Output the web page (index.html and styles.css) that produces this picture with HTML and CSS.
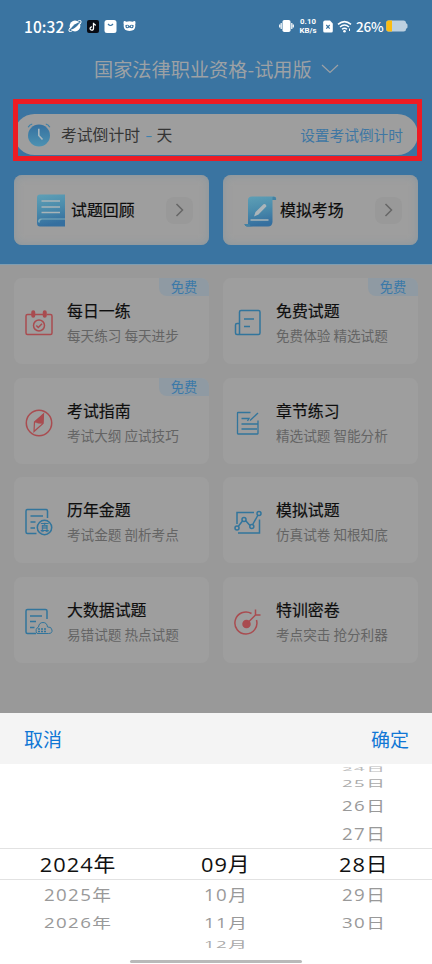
FILE: index.html
```html
<!DOCTYPE html>
<html lang="zh-CN">
<head>
<meta charset="utf-8">
<title>国家法律职业资格</title>
<link rel="stylesheet" href="styles.css">
</head>
<body>
<div class="phone">
  <header class="top">
    <div class="status">
      <span class="clock">10:32</span>
      <svg class="s-planet" width="14" height="14" viewBox="0 0 14 14"><circle cx="7" cy="7" r="5.400" fill="#fff"/><path d="M2.600 10.600C3.300 8.600 4.800 6.800 7 5.300S10.700 3.500 11.400 3.500C10.700 5.400 9.200 7.200 7 8.700S3.200 10.600 2.600 10.600Z" fill="#3a74a1"/><path d="M1.800 8.800Q.3 11.500 1.200 12.300T4.500 11.600M12.200 5.200Q13.700 2.500 12.800 1.700T9.500 2.400" fill="none" stroke="#fff" stroke-width="1"/></svg>
      <svg class="s-note" width="12" height="13" viewBox="0 0 12 13"><rect width="12" height="13" rx="2" fill="#080b14"/><path d="M6.500 2.800V8.500A1.700 1.700 0 1 1 5 6.800M6.500 3C6.800 4.500 7.800 5.200 9 5.200" fill="none" stroke="#fff" stroke-width="1.300"/></svg>
      <svg class="s-bag" width="13" height="13" viewBox="0 0 13 13"><rect x=".5" width="12" height="13" rx="2.500" fill="#fff"/><path d="M4 4Q6.500 7 9 4" fill="none" stroke="#3a74a1" stroke-width="1.200"/></svg>
      <svg class="s-cat" width="13" height="12" viewBox="0 0 13 12"><path d="M.8 1.200Q2 .8 3.300 1.700 6.500.7 9.700 1.700 11 .8 12.200 1.200 12.800 3 12.200 4.500 13.200 11 6.500 11T.8 4.500Q.2 3 .8 1.200Z" fill="#fff"/><path d="M2.200 5.500Q4.500 4 6.500 6 8.500 4 10.800 5.500 10.500 8.500 8.500 8.300L6.500 7.400 4.500 8.300Q2.500 8.500 2.200 5.500Z" fill="#3a74a1"/><circle cx="4.400" cy="6.400" r=".8" fill="#fff"/><circle cx="8.600" cy="6.400" r=".8" fill="#fff"/></svg>
      <svg class="s-vib" width="15" height="14" viewBox="0 0 15 14"><rect x="3.500" y="1" width="8" height="12" rx="1.800" fill="#fff"/><path d="M2.200 4V10M.7 5.500V8.500M12.800 4V10M14.300 5.500V8.500" stroke="#fff" stroke-width="1.200"/></svg>
      <span class="speed"><span>0.10</span><span>KB/s</span></span>
      <svg class="s-sim" width="10" height="13" viewBox="0 0 10 13"><path d="M2 .5H7L9.800 3.500V11Q9.800 12.500 8.300 12.500H1.700Q.2 12.500.2 11V2.300Q.2.500 2 .5Z" fill="#fff"/><path d="M3.300 5 6.700 8.700M6.700 5 3.300 8.700" stroke="#3a74a1" stroke-width="1.200"/></svg>
      <svg class="s-wifi" width="15" height="13" viewBox="0 0 15 13"><path d="M1 4.400Q7.500-1.200 14 4.400M3 7Q7.500 3 12 7M5 9.300Q7.500 7.200 10 9.300" fill="none" stroke="#fff" stroke-width="1.500"/><circle cx="7.500" cy="11.200" r="1.300" fill="#fff"/><path d="M12.500 8.500V11" stroke="#fff"/></svg>
      <span class="percent">26%</span>
      <svg class="s-bat" width="22" height="12" viewBox="0 0 22 12"><path d="M2.500.5H17.500Q20 .5 20 3L21.500 4.500V7.500L20 9Q20 11.500 17.500 11.500H2.500Q.3 11.500.3 9.500V2.500Q.3.500 2.500.5Z" fill="#bdd0e0"/><path d="M6 .5V11.500H2.500Q.3 11.500.3 9.500V2.500Q.3.500 2.500.5Z" fill="#fbbc12"/></svg>
    </div>
    <h1 class="exam">国家法律职业资格-试用版<svg width="18" height="10" viewBox="0 0 18 10"><path d="M1 1 9 8.500 17 1" fill="none" stroke="#9da1a5" stroke-width="1.200"/></svg></h1>
    <div class="countdown">
      <svg width="24" height="24" viewBox="0 0 24 24"><circle cx="12" cy="12.500" r="11" fill="url(#g2)"/><path d="M1.200 4.200Q2.500 1.500 5.200 1M18.800 1Q21.500 1.500 22.800 4.200" fill="none" stroke="#3b7fa8" stroke-width="1.200"/><path d="M11.800 5.800V12.500L15.500 16.500" fill="none" stroke="#a8b6be" stroke-width="1.600"/></svg>
      <span class="label">考试倒计时 <i>-</i> 天</span>
      <a class="set">设置考试倒计时</a>
      <div class="frame"></div>
    </div>
    <div class="quick">
      <div class="qcard">
        <svg width="28" height="33" viewBox="0 0 28 33"><path d="M3 .5H28V32.500H3Q0 32.500 0 29V3.500Q0 .5 3 .5Z" fill="url(#g1)"/><path d="M1 28Q1 24.500 4 24.500H28V25.500H5Q2.500 26 2.500 29Z" fill="#7fabba"/><path d="M4.500 7H23M4.500 13H23M4.500 18.500H23" stroke="#a8b4b8" stroke-width="1.500"/></svg>
        <span>试题回顾</span><b><svg width="9" height="14" viewBox="0 0 9 14"><path d="M1.500 1 7.500 7 1.500 13" fill="none" stroke="#666" stroke-width="1.500"/></svg></b>
      </div>
      <div class="qcard second">
        <svg width="33" height="33" viewBox="0 0 33 33"><path d="M8 2.500H30Q33 3 32 6H28.500V28Q28 32.500 24 32.500H3Q.5 32 .5 30H4V6Q4 2.500 8 2.500Z" fill="url(#g1)"/><path d="M28.500 6V3Q32.500 2 32 6ZM.5 30H5.500Q6 32.500 9 32.500H3Q.5 32 .5 30Z" fill="#4481a2"/><path d="M10 22.500 11.500 18 19.500 10.300Q21 9.500 22 11T21.800 13L14.500 20.500Z" fill="#abb5ba"/><path d="M6.500 26H24.500" stroke="#a8b4b8" stroke-width="1.500"/></svg>
        <span>模拟考场</span><b><svg width="9" height="14" viewBox="0 0 9 14"><path d="M1.500 1 7.500 7 1.500 13" fill="none" stroke="#666" stroke-width="1.500"/></svg></b>
      </div>
    </div>
  </header>
  <svg class="defs" width="0" height="0"><defs><linearGradient id="g1" x1="0" y1="0" x2=".2" y2="1"><stop offset="0" stop-color="#5fa0b6"/><stop offset=".5" stop-color="#4b8cac"/><stop offset="1" stop-color="#356f9f"/></linearGradient><linearGradient id="g2" x1="0" y1="0" x2="0" y2="1"><stop offset="0" stop-color="#36719f"/><stop offset="1" stop-color="#4c91b2"/></linearGradient></defs></svg>

  <main class="grid">
    <section class="card"><svg class="ic red" viewBox="0 0 28 28"><path d="M7 5.500H2.500Q1 5.500 1 7V24Q1 25.500 2.500 25.500H25.500Q27 25.500 27 24V7Q27 5.500 25.500 5.500H21.500M10 5.500H18.500"/><rect class="fill" x="7" y="2" width="2.500" height="6" rx="1.200"/><rect class="fill" x="18.500" y="2" width="2.500" height="6" rx="1.200"/><circle cx="14" cy="16.500" r="5.500"/><path d="M11.300 16.500 13.300 18.500 17 14.700"/></svg><div><h2>每日一练</h2><p>每天练习 每天进步</p></div><em>免费</em></section>
    <section class="card"><svg class="ic blue" viewBox="0 0 28 28"><path d="M5.500 25.500V3Q5.500 1.500 7 1.500H24.500Q26 1.500 26 3V24Q26 25.500 24.500 25.500H3Q1.500 25.500 1.500 24V16Q1.500 14.500 3 14.500H5.500M10 10H20M10 17.500H16"/></svg><div><h2>免费试题</h2><p>免费体验 精选试题</p></div><em>免费</em></section>
    <section class="card"><svg class="ic red" viewBox="0 0 28 28"><circle cx="14" cy="14" r="12.700"/><path d="M18.500 5 9.500 13 9 22.500 18 14.500Z" stroke-width="1.200"/><path class="fill" stroke-width=".5" d="M18.500 5 9.500 13 13.500 14.200 18 14.500Z"/></svg><div><h2>考试指南</h2><p>考试大纲 应试技巧</p></div><em>免费</em></section>
    <section class="card"><svg class="ic blue thin" viewBox="0 0 28 28"><path d="M16.500 3.500H4Q3.500 3.500 3.500 4V24.500Q3.500 25 4 25H23.500Q24 25 24 24.500V11.500M24 4 16 11.500M7.500 9.500H15L13.500 12M7.500 15H24M7.500 20H23"/></svg><div><h2>章节练习</h2><p>精选试题 智能分析</p></div></section>
    <section class="card"><svg class="ic blue" viewBox="0 0 28 28"><path d="M11.500 25.500H2.500Q1 25.500 1 24V3Q1 1.500 2.500 1.500H21Q22.500 1.500 22.500 3V10M5.500 8H18M5.500 14H10.500M5.500 20H10"/><circle cx="19.500" cy="19.500" r="7.200"/><text x="19.500" y="23" text-anchor="middle">真</text></svg><div><h2>历年金题</h2><p>考试金题 剖析考点</p></div></section>
    <section class="card"><svg class="ic blue" viewBox="0 0 28 28"><path d="M3 16V4.500H20M4 25H25.500V11.500M4.500 18 8.500 13M11.500 12.500 16 17.500M18.700 16.500 24 7"/><circle cx="3" cy="20" r="2"/><circle cx="10" cy="11.500" r="2"/><circle cx="17.800" cy="18.500" r="2"/><circle cx="25" cy="5.500" r="2"/></svg><div><h2>模拟试题</h2><p>仿真试卷 知根知底</p></div></section>
    <section class="card"><svg class="ic blue" viewBox="0 0 28 28"><path d="M11 25.500H2.500Q1 25.500 1 24V3Q1 1.500 2.500 1.500H20.500Q22 1.500 22 3V11M5 8H17M5 13.500H11M5 19.500H9.500"/><path d="M12 25.500Q9.500 21 13.500 19 14 14.500 18 14.500T22.500 19Q26.500 18.500 27 22T23.500 25.500Z" stroke-width="1"/><path d="M13 21H21M13 23.500H21" stroke-dasharray="2 1"/></svg><div><h2>大数据试题</h2><p>易错试题 热点试题</p></div></section>
    <section class="card"><svg class="ic red" viewBox="0 0 28 28"><path d="M17.500 5.500A11 11 0 1 0 22.500 12"/><circle class="fill" cx="12.500" cy="16" r="3.500"/><path d="M13 15.500 22 6.500M21.500 1.500V7H26.500"/></svg><div><h2>特训密卷</h2><p>考点突击 抢分利器</p></div></section>
  </main>

  <div class="sheet">
    <div class="bar"><a>取消</a><a>确定</a></div>
    <div class="picker">
      <div class="col">
        <div class="u4"></div><div class="u3"></div><div class="u2"></div><div class="u1"></div>
        <div class="now"><span>2024年</span></div>
        <div class="d1"><span>2025年</span></div><div class="d2"><span>2026年</span></div><div class="d3"></div>
      </div>
      <div class="col">
        <div class="u4"></div><div class="u3"></div><div class="u2"></div><div class="u1"></div>
        <div class="now"><span>09月</span></div>
        <div class="d1"><span>10月</span></div><div class="d2"><span>11月</span></div><div class="d3"><span>12月</span></div>
      </div>
      <div class="col">
        <div class="u4"><span>24日</span></div><div class="u3"><span>25日</span></div><div class="u2"><span>26日</span></div><div class="u1"><span>27日</span></div>
        <div class="now"><span>28日</span></div>
        <div class="d1"><span>29日</span></div><div class="d2"><span>30日</span></div><div class="d3"></div>
      </div>
    </div>
    <div class="home"></div>
  </div>
</div>
</body>
</html>
```
FILE: styles.css
```css
* { box-sizing: border-box; }
body {
  margin: 0;
  font-family: "Noto Sans CJK SC", sans-serif;
}
.phone {
  width: 432px;
  height: 964px;
  display: flex;
  flex-direction: column;
  overflow: hidden;
  background: #999;
}
svg { display: block; flex: none; }
.defs { height: 0; }

.top {
  height: 265px;
  flex: none;
  background: #3a74a1;
  border-bottom: 1px solid #7f9db1;
}
.status {
  height: 52px;
  padding: 0 24px;
  display: flex;
  align-items: center;
  color: #fff;
}
.clock { width: 44px; font-size: 15.500px; line-height: 20px; letter-spacing: .1px; font-weight: 500; }
.s-note { margin-left: 5px; }
.s-bag { margin-left: 5px; }
.s-cat { margin-left: 6px; }
.s-vib { margin-left: auto; }
.speed {
  width: 20px;
  margin-left: 4px;
  display: flex;
  flex-direction: column;
  align-items: center;
  font-family: Roboto, sans-serif;
  font-size: 7.800px;
  line-height: 9px;
  font-weight: 700;
  letter-spacing: .1px;
}
.s-sim { margin-left: 5px; }
.s-wifi { margin-left: 4px; }
.percent { width: 28px; margin-left: 4px; font-size: 13.500px; line-height: 20px; font-weight: 500; letter-spacing: -.2px; white-space: nowrap; }
.s-bat { margin-left: 2px; }

.exam {
  height: 34px;
  margin: 0 0 28px;
  padding-left: 94px;
  display: flex;
  align-items: center;
  gap: 9px;
  color: #9da1a5;
  font-size: 19.200px;
  font-weight: 400;
  line-height: 35px;
  white-space: nowrap;
}
.countdown {
  position: relative;
  height: 41px;
  margin: 0 14px 20px;
  padding: 0 15px 0 13px;
  display: flex;
  align-items: center;
  border-radius: 21px;
  background: #9e9e9e;
}
.label {
  margin-left: 10px;
  color: #353535;
  font-size: 15.800px;
  line-height: 40px;
  white-space: pre;
}
.label i { display: inline-block; color: #3f81ad; font-style: normal; transform: scaleX(1.300); margin: 0 2px; }
.set { margin-left: auto; color: #3f77a3; font-size: 14.700px; line-height: 40px; }
.frame {
  position: absolute;
  left: -1px;
  top: -15px;
  width: 409px;
  height: 62px;
  border: 5px solid #ec1c24;
}
.quick {
  padding: 0 14px;
  display: grid;
  grid-template-columns: 1fr 1fr;
  gap: 14px;
}
.qcard {
  height: 70px;
  padding: 0 16px 0 23px;
  display: flex;
  align-items: center;
  border-radius: 8px;
  background: #9e9e9e;
  box-shadow: inset 0 0 8px #87969f;
}
.qcard.second { padding-left: 21px; }
.qcard span { margin-left: 6px; color: #0c0c0c; font-size: 15.900px; line-height: 24px; -webkit-text-stroke: .2px #0c0c0c; }
.qcard.second span { margin-left: 3px; }
.qcard b {
  width: 27px;
  height: 27px;
  margin-left: auto;
  display: flex;
  align-items: center;
  justify-content: center;
  border-radius: 8px;
  background: #999;
}

.grid {
  flex: none;
  height: 448px;
  padding: 13px 14px 0;
  display: grid;
  grid-template-columns: 1fr 1fr;
  grid-auto-rows: 86px;
  gap: 13.700px 14px;
}
.card {
  position: relative;
  padding: 4px 0 0 11px;
  display: flex;
  align-items: center;
  border-radius: 8px;
  background: #9e9e9e;
}
.ic {
  width: 28px;
  height: 28px;
  fill: none;
  stroke-width: 1.500;
}
.ic.thin { stroke-width: 1.300; }
.red { stroke: #a94c50; }
.red .fill { fill: #a94c50; }
.blue { stroke: #32759c; }
.blue text { fill: #32759c; stroke: none; font-size: 9px; font-weight: 700; }
.card div { margin-left: 14px; }
.card h2 { margin: 0; color: #0e0e0e; font-size: 15.900px; line-height: 24px; font-weight: 400; -webkit-text-stroke: .2px #0e0e0e; }
.card p { margin: 0; color: #646464; font-size: 13.600px; line-height: 24px; white-space: nowrap; }
.card em {
  position: absolute;
  top: 0;
  right: 0;
  width: 50px;
  height: 18px;
  border-radius: 0 8px 0 8px;
  background: #8f9aa3;
  color: #3b79a8;
  font-size: 13.300px;
  line-height: 18px;
  font-style: normal;
  text-align: center;
}

.sheet { height: 251px; flex: none; background: #fff; }
.bar {
  height: 51px;
  padding: 0 23px 0 24px;
  display: flex;
  justify-content: space-between;
  background: #f4f4f4;
  color: #1077d5;
  font-size: 19px;
  line-height: 51px;
}
.picker {
  height: 192px;
  display: grid;
  grid-template-columns: 156px 140px 136px;
}
.col div {
  display: flex;
  align-items: center;
  justify-content: center;
  overflow: hidden;
  color: #999;
  font-family: "Open Sans", "Noto Sans CJK SC", sans-serif;
  font-size: 17px;
  line-height: 24px;
  letter-spacing: 1.300px;
}
.col span { flex: none; margin: -8px 0; white-space: nowrap; }
.col .u4 { height: 10px; color: #bbb; }
.col .u3 { height: 19px; color: #aaa; }
.col .u2 { height: 26px; }
.col .u1 { height: 29px; }
.col .now {
  height: 32px;
  padding-top: 1px;
  border-top: 1px solid #e2e2e2;
  border-bottom: 1px solid #e2e2e2;
  color: #111;
  font-size: 20px;
  letter-spacing: .9px;
}
.col .d1 { height: 30px; }
.col .d2 { height: 25px; }
.col .d3 { height: 20px; color: #aaa; }
.now span { transform: scaleX(1.090); }
.u1 span, .d1 span { transform: scale(1.100, .960); }
.u2 span, .d2 span { transform: scale(1.100, .820); }
.u3 span, .d3 span { transform: scale(1.100, .560); }
.u4 span { transform: scale(1.100, .320); }
.home { width: 172px; height: 3px; margin: 4px auto 0; border-radius: 2px; background: #b9b9b9; }
```
